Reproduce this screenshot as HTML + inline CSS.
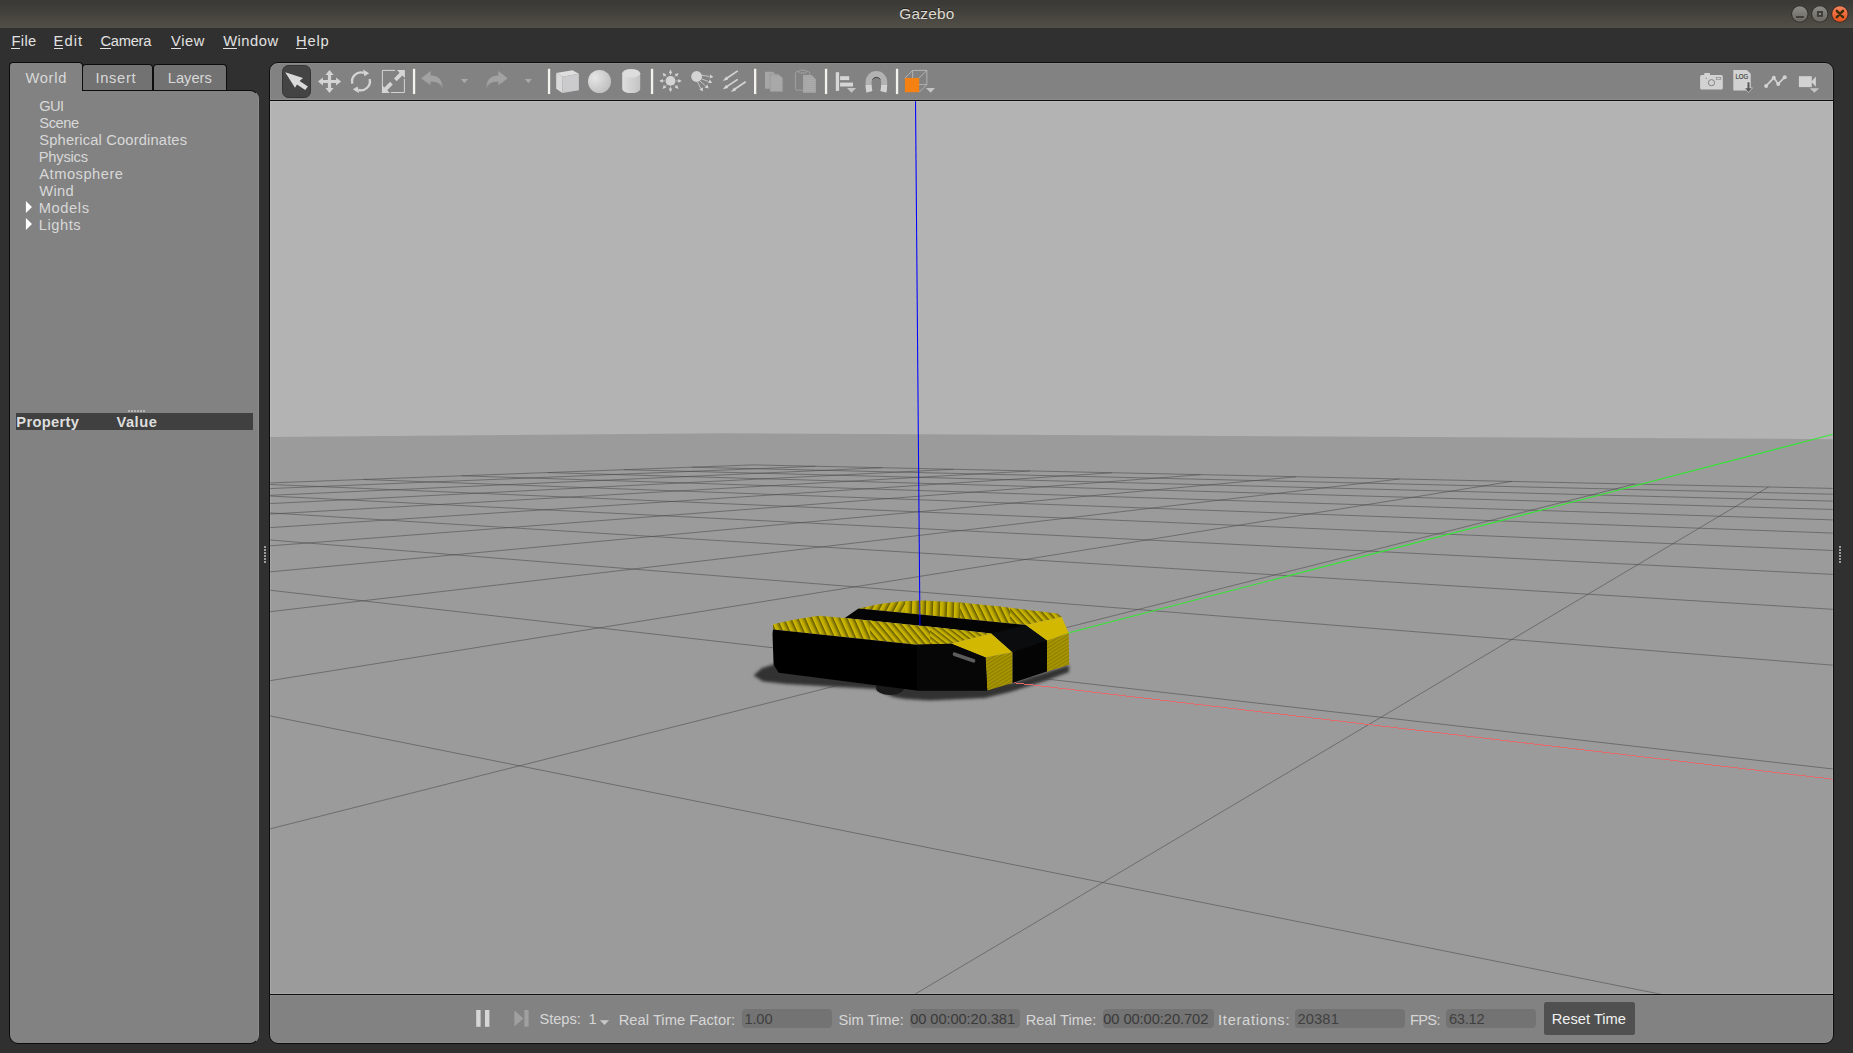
<!DOCTYPE html>
<html><head><meta charset="utf-8"><title>Gazebo</title>
<style>
*{box-sizing:border-box;margin:0;padding:0}
html,body{width:1853px;height:1053px;overflow:hidden;background:#303030}
body{font-family:"Liberation Sans",sans-serif;font-size:14.7px;color:#d0d0d0;position:relative}
.abs{position:absolute}
.t{position:absolute;white-space:pre;line-height:1;font-size:14.7px}
.t u{letter-spacing:0;text-decoration:none;box-shadow:0 1px 0 currentColor;display:inline-block;line-height:14px}
#title{left:0;top:0;width:1853px;height:28px;background:linear-gradient(#3a3935 0,#3b3a36 12%,#524f48 100%)}
.tab{position:absolute;height:26px;background:#727272;border:1px solid #0c0c0c;border-bottom:none;border-radius:4px 4px 0 0}
#pane{left:9px;top:90px;width:250px;height:954px;background:#828282;border:1px solid #0c0c0c;border-right:1px solid #8e8e8e;border-radius:0 9px 9px 9px}
#tb{left:269px;top:62px;width:1565px;height:39px;background:#828282;border:1px solid #0c0c0c;border-radius:9px 9px 0 0}
#view{left:269px;top:101px;width:1565px;height:893px;background:#b3b3b3;overflow:hidden;border-left:1px solid #0c0c0c;border-right:1px solid #0c0c0c}
.hl{position:absolute;left:0;top:0;right:0;bottom:0;box-shadow:inset 0 0 0 1px rgba(255,255,255,0.12)}
#bot{left:269px;top:994px;width:1565px;height:50px;background:#828282;border:1px solid #0c0c0c;border-radius:0 0 9px 9px}
.box{position:absolute;top:1009px;height:19px;background:#737373;border-radius:4px}
</style></head><body>
<!-- title bar -->
<div id="title" class="abs"></div>
<!-- left panel -->
<div id="pane" class="abs"></div>
<div class="tab" style="left:9px;top:62px;width:74px;height:29px;background:#828282"></div>
<div class="tab" style="left:82px;top:64px;width:71px"></div>
<div class="tab" style="left:153px;top:64px;width:74px"></div>
<div class="abs" style="left:16px;top:413px;width:237px;height:17px;background:#404040"></div>
<!-- toolbar -->
<div id="tb" class="abs"><div class="hl" style="border-radius:8px 8px 0 0;box-shadow:inset 0 0 0 1px rgba(255,255,255,0.08)"></div></div>
<!-- 3d view -->
<div id="view" class="abs">
<svg width="1563" height="893" viewBox="270 101 1563 893" style="position:absolute;left:0;top:0">
<polygon points="260,437.2 725.5,433.3 1843,439.2 1843,1004 260,1004" fill="#9b9b9b"/>
<g stroke="#4a4a4a" stroke-width="1" stroke-opacity="0.56" fill="none"><line x1="220.0" y1="484.8" x2="752.6" y2="464.9"/><line x1="220.0" y1="490.6" x2="815.3" y2="466.3"/><line x1="220.0" y1="497.6" x2="882.1" y2="467.7"/><line x1="220.0" y1="506.1" x2="953.5" y2="469.3"/><line x1="220.0" y1="516.9" x2="1030.0" y2="471.0"/><line x1="220.0" y1="530.9" x2="1112.1" y2="472.8"/><line x1="220.0" y1="549.7" x2="1200.6" y2="474.7"/><line x1="220.0" y1="576.5" x2="1296.0" y2="476.8"/><line x1="220.0" y1="617.6" x2="1399.4" y2="479.0"/><line x1="220.0" y1="688.7" x2="1511.8" y2="481.4"/><line x1="220.0" y1="705.9" x2="1883.0" y2="1038.7"/><line x1="220.0" y1="841.5" x2="1634.3" y2="484.1"/><line x1="220.0" y1="584.5" x2="1883.0" y2="774.7"/><line x1="831.1" y1="1044.0" x2="1768.4" y2="487.0"/><line x1="220.0" y1="536.0" x2="1883.0" y2="669.2"/><line x1="220.0" y1="509.8" x2="1883.0" y2="612.4"/><line x1="220.0" y1="493.5" x2="1883.0" y2="576.9"/><line x1="251.2" y1="483.7" x2="1883.0" y2="552.6"/><line x1="363.7" y1="479.5" x2="1883.0" y2="534.9"/><line x1="461.6" y1="475.8" x2="1883.0" y2="521.5"/><line x1="547.7" y1="472.6" x2="1883.0" y2="510.9"/><line x1="623.8" y1="469.7" x2="1883.0" y2="502.4"/><line x1="691.7" y1="467.2" x2="1883.0" y2="495.4"/><line x1="752.6" y1="464.9" x2="1883.0" y2="489.5"/></g>
<defs>
<linearGradient id="sg" x1="0" y1="0" x2="1" y2="0"><stop offset="0" stop-color="#d4bd00"/><stop offset="0.45" stop-color="#b9a600"/><stop offset="1" stop-color="#5e5500"/></linearGradient>
<pattern id="pf1" width="6.4" height="8" patternUnits="userSpaceOnUse" patternTransform="translate(773 624) rotate(-24)"><rect width="6.4" height="8" fill="url(#sg)"/></pattern>
<pattern id="pf2" width="5.6" height="8" patternUnits="userSpaceOnUse" patternTransform="translate(870 630) rotate(-40)"><rect width="5.6" height="8" fill="url(#sg)"/></pattern>
<pattern id="pf3" width="4.6" height="8" patternUnits="userSpaceOnUse" patternTransform="translate(930 636) rotate(-52)"><rect width="4.6" height="8" fill="url(#sg)"/></pattern>
<pattern id="pr1" width="6.6" height="8" patternUnits="userSpaceOnUse" patternTransform="translate(858 608) rotate(28)"><rect width="6.6" height="8" fill="url(#sg)"/></pattern>
<pattern id="pr2" width="7" height="8" patternUnits="userSpaceOnUse" patternTransform="translate(905 608) rotate(2)"><rect width="7" height="8" fill="url(#sg)"/></pattern>
<pattern id="pr3" width="6.2" height="8" patternUnits="userSpaceOnUse" patternTransform="translate(960 608) rotate(-26)"><rect width="6.2" height="8" fill="url(#sg)"/></pattern>
<pattern id="pr4" width="5.4" height="8" patternUnits="userSpaceOnUse" patternTransform="translate(1010 608) rotate(-42)"><rect width="5.4" height="8" fill="url(#sg)"/></pattern>
<pattern id="ps" width="3" height="3" patternUnits="userSpaceOnUse" patternTransform="rotate(-32)">
<rect width="3" height="3" fill="#a89600"/><rect width="3" height="1.1" fill="#8c7d00"/>
</pattern>
<clipPath id="cr"><path d="M858.5,608.4 L880,604 L899.5,601.5 L922.8,600.4 L960,602.5 L1000,606.5 L1057.3,613.5 L1061.8,616.9 L1025.4,624.9 L900,612.4 Z"/></clipPath>
<clipPath id="cf"><path d="M773,624.3 L795,619.5 L818.6,615.8 L844.8,618 L940,627.7 L991.2,633.4 L951.3,643.7 L916.6,644.8 L773,629.4 Z"/></clipPath>
<filter id="bl" x="-20%" y="-50%" width="140%" height="200%"><feGaussianBlur stdDeviation="1.5"/></filter>
</defs>
<!-- shadow -->
<path d="M753.5,675.5 L762,668 L775,664 L1012,683 L1069,665 L1069,672 L1045,681 L1010,692 L985,698 L930,700.5 L905,699 L893,697 L876,689 L830,686.5 L786,684 L763,681.5 Z" fill="#333333" filter="url(#bl)"/>
<ellipse cx="890" cy="688" rx="14" ry="7" fill="#1a1a1a"/>
<!-- axes -->
<g shape-rendering="crispEdges" fill="none" stroke-width="1">
<line x1="1014" y1="682.8" x2="1833" y2="779.2" stroke="#e26a6a"/>

</g>
<line x1="1066" y1="633.6" x2="1833.5" y2="434.2" stroke="#2aee2a" stroke-width="1.05" stroke-opacity="0.92"/>
<!-- rear yellow top -->
<g clip-path="url(#cr)">
<rect x="850" y="598" width="62" height="30" fill="url(#pr1)"/>
<rect x="905" y="598" width="60" height="30" fill="url(#pr2)"/>
<rect x="960" y="598" width="52" height="30" fill="url(#pr3)"/>
<rect x="1010" y="598" width="55" height="30" fill="url(#pr4)"/>
</g>
<!-- rear right bright yellow -->
<path d="M1025.4,624.9 L1061.8,616.9 L1068.7,632.9 L1047,640.8 Z" fill="#d2b800"/>
<path d="M1047,640.8 L1068.7,632.9 L1069.2,664.8 L1047,671.6 Z" fill="url(#ps)"/>
<!-- black gap -->
<path d="M844.8,618 L858.5,608.4 L900,612.4 L1025.4,624.9 L1047,640.8 L1047,671.6 L1012.3,683 L1012.3,652.2 L991.2,633.4 L940,627.7 Z" fill="#040404"/>
<path d="M991.2,633.4 L1025.4,624.9 L1047,640.8 L1012.3,652.2 Z" fill="#0b0c0e"/>
<!-- front yellow top -->
<g clip-path="url(#cf)">
<rect x="770" y="612" width="102" height="36" fill="url(#pf1)"/>
<rect x="870" y="612" width="62" height="36" fill="url(#pf2)"/>
<rect x="930" y="612" width="65" height="36" fill="url(#pf3)"/>
</g>
<!-- front right bright yellow -->
<path d="M951.3,643.7 L991.2,633.4 L1012.3,652.2 L985.5,657.4 Z" fill="#d2b800"/>
<path d="M985.5,657.4 L1012.3,652.2 L1012.3,683 L987.2,690.4 Z" fill="url(#ps)"/>
<!-- black body -->
<path d="M773,629.4 L916.6,644.8 L951.3,643.7 L985.5,657.4 L987.2,690.4 L916.6,690.4 L778.7,672.7 L773.6,664.8 L772.5,634 Z" fill="#000"/>
<path d="M917,644.8 L951.3,643.7 L985.5,657.4 L987.2,690.4 L917,690.4 Z" fill="#060606"/>
<line x1="954.5" y1="654.2" x2="973.5" y2="660.8" stroke="#5c5c5c" stroke-width="3.6" stroke-linecap="round"/>
<!-- blue axis -->
<line x1="915.5" y1="100" x2="919.95" y2="625.6" stroke="#0000ff" stroke-width="1.05"/>

</svg>
<div class="hl"></div>
</div>
<!-- bottom bar -->
<div id="bot" class="abs"><div class="hl" style="border-radius:0 0 8px 8px;box-shadow:inset 0 0 0 1px rgba(255,255,255,0.08)"></div></div>
<div class="box" style="left:742px;width:90px"></div>
<div class="box" style="left:909.5px;width:110px"></div>
<div class="box" style="left:1102.5px;width:111px"></div>
<div class="box" style="left:1295px;width:110px"></div>
<div class="box" style="left:1446px;width:90px"></div>
<div class="abs" style="left:1544px;top:1002px;width:91px;height:33px;background:#505050;border-radius:2.5px"></div>
<span class="t" style="left:899.30px;top:6.46px;color:#dfdbd2;letter-spacing:0.211px;text-shadow:0 -1px 0 #22211e;font-size:15.4px">Gazebo</span>
<span class="t" style="left:11.40px;top:34.06px;color:#e2e2e2;letter-spacing:0.401px;"><u style="margin-right:0.401px">F</u>ile</span>
<span class="t" style="left:53.50px;top:34.06px;color:#e2e2e2;letter-spacing:1.091px;"><u style="margin-right:1.091px">E</u>dit</span>
<span class="t" style="left:100.40px;top:34.06px;color:#e2e2e2;letter-spacing:-0.254px;"><u style="margin-right:-0.254px">C</u>amera</span>
<span class="t" style="left:171.00px;top:34.06px;color:#e2e2e2;letter-spacing:0.479px;"><u style="margin-right:0.479px">V</u>iew</span>
<span class="t" style="left:223.20px;top:34.06px;color:#e2e2e2;letter-spacing:0.514px;"><u style="margin-right:0.514px">W</u>indow</span>
<span class="t" style="left:296.10px;top:34.06px;color:#e2e2e2;letter-spacing:0.821px;"><u style="margin-right:0.821px">H</u>elp</span>
<span class="t" style="left:25.40px;top:71.16px;color:#d8d8d8;letter-spacing:0.720px;">World</span>
<span class="t" style="left:95.40px;top:71.16px;color:#d8d8d8;letter-spacing:0.690px;">Insert</span>
<span class="t" style="left:167.80px;top:71.16px;color:#d8d8d8;letter-spacing:-0.008px;">Layers</span>
<span class="t" style="left:39.30px;top:98.56px;color:#d8d8d8;letter-spacing:-0.716px;">GUI</span>
<span class="t" style="left:39.30px;top:115.56px;color:#d8d8d8;letter-spacing:-0.444px;">Scene</span>
<span class="t" style="left:39.30px;top:132.56px;color:#d8d8d8;letter-spacing:0.162px;">Spherical Coordinates</span>
<span class="t" style="left:38.80px;top:149.56px;color:#d8d8d8;letter-spacing:-0.227px;">Physics</span>
<span class="t" style="left:39.30px;top:166.56px;color:#d8d8d8;letter-spacing:0.498px;">Atmosphere</span>
<span class="t" style="left:39.30px;top:183.56px;color:#d8d8d8;letter-spacing:0.335px;">Wind</span>
<span class="t" style="left:38.80px;top:200.56px;color:#d8d8d8;letter-spacing:0.579px;">Models</span>
<span class="t" style="left:38.80px;top:217.56px;color:#d8d8d8;letter-spacing:0.530px;">Lights</span>
<span class="t" style="left:16.30px;top:415.16px;color:#dedede;letter-spacing:0.324px;font-weight:bold">Property</span>
<span class="t" style="left:116.40px;top:415.16px;color:#dedede;letter-spacing:0.523px;font-weight:bold">Value</span>
<span class="t" style="left:539.40px;top:1011.66px;color:#d6d6d6;letter-spacing:-0.032px;">Steps:</span>
<span class="t" style="left:588.60px;top:1011.66px;color:#d6d6d6;letter-spacing:0.000px;">1</span>
<span class="t" style="left:618.70px;top:1013.26px;color:#d6d6d6;letter-spacing:0.038px;">Real Time Factor:</span>
<span class="t" style="left:744.40px;top:1012.36px;color:#404040;letter-spacing:-0.139px;">1.00</span>
<span class="t" style="left:838.50px;top:1013.26px;color:#d6d6d6;letter-spacing:-0.008px;">Sim Time:</span>
<span class="t" style="left:910.20px;top:1012.36px;color:#3a3a3a;letter-spacing:-0.093px;">00 00:00:20.381</span>
<span class="t" style="left:1025.70px;top:1013.26px;color:#d6d6d6;letter-spacing:0.047px;">Real Time:</span>
<span class="t" style="left:1103.20px;top:1012.36px;color:#3a3a3a;letter-spacing:-0.072px;">00 00:00:20.702</span>
<span class="t" style="left:1218.10px;top:1013.26px;color:#d6d6d6;letter-spacing:0.689px;">Iterations:</span>
<span class="t" style="left:1297.40px;top:1012.36px;color:#404040;letter-spacing:0.157px;">20381</span>
<span class="t" style="left:1410.10px;top:1013.26px;color:#d6d6d6;letter-spacing:-0.755px;">FPS:</span>
<span class="t" style="left:1448.90px;top:1012.36px;color:#404040;letter-spacing:-0.272px;">63.12</span>
<span class="t" style="left:1551.70px;top:1011.66px;color:#f0f0f0;letter-spacing:0.003px;">Reset Time</span>
<svg class="abs" width="1853" height="1053" viewBox="0 0 1853 1053" style="left:0;top:0;pointer-events:none">
<defs>
<linearGradient id="gb" x1="0" y1="0" x2="0" y2="1"><stop offset="0" stop-color="#8d8c86"/><stop offset="1" stop-color="#696862"/></linearGradient>
<linearGradient id="gc" x1="0" y1="0" x2="0" y2="1"><stop offset="0" stop-color="#f5845c"/><stop offset="1" stop-color="#e7511c"/></linearGradient>
<radialGradient id="gs" cx="0.3" cy="0.33" r="0.75"><stop offset="0" stop-color="#e6e6e6"/><stop offset="0.5" stop-color="#d2d2d2"/><stop offset="1" stop-color="#c0c0c0"/></radialGradient>
<linearGradient id="gy" x1="0" y1="0" x2="1" y2="0"><stop offset="0" stop-color="#dedede"/><stop offset="1" stop-color="#c4c4c4"/></linearGradient>
<linearGradient id="gu" x1="0" y1="0" x2="0" y2="1"><stop offset="0" stop-color="#a2a2a2"/><stop offset="0.55" stop-color="#a2a2a2"/><stop offset="1" stop-color="#a2a2a2" stop-opacity="0"/></linearGradient>
</defs>
<!-- window buttons -->
<g>
<circle cx="1799.8" cy="14" r="8.6" fill="#2e2d29"/><circle cx="1799.8" cy="14" r="7.7" fill="url(#gb)"/>
<rect x="1796" y="16.1" width="7.8" height="1.8" fill="#3c3b37"/>
<circle cx="1819.8" cy="14" r="8.6" fill="#2e2d29"/><circle cx="1819.8" cy="14" r="7.7" fill="url(#gb)"/>
<rect x="1817.9" y="12" width="4.1" height="3.9" fill="#8b8a84" stroke="#3c3b37" stroke-width="1.9"/>
<circle cx="1839.9" cy="14" r="8.6" fill="#3a2a22"/><circle cx="1839.9" cy="14" r="7.7" fill="url(#gc)"/>
<path d="M1836.8,10.9 L1843,17.1 M1843,10.9 L1836.8,17.1" stroke="#3a2d0c" stroke-width="2.5" stroke-linecap="round"/>
</g>
<!-- separators -->
<rect x="412.9" y="68.8" width="2.3" height="25.3" fill="#f4f2ec"/><rect x="547.9" y="68.8" width="2.3" height="25.3" fill="#f4f2ec"/><rect x="650.9" y="68.8" width="2.3" height="25.3" fill="#f4f2ec"/><rect x="754.0" y="68.8" width="2.3" height="25.3" fill="#f4f2ec"/><rect x="824.9" y="68.8" width="2.3" height="25.3" fill="#f4f2ec"/><rect x="895.9" y="68.8" width="2.3" height="25.3" fill="#f4f2ec"/>
<!-- selected tool button -->
<rect x="282.5" y="65.5" width="28" height="32" rx="6" fill="#444444" stroke="#353535"/>
<path d="M285.2,72.2 L303,77.9 L299.6,81 L307.9,86.6 L305.2,90 L297,84.5 L295,87.7 Z" fill="#dadada"/>
<!-- move -->
<g fill="#d4d4d4">
<path d="M329.5,69.9 L333.6,74.9 L331.1,74.9 L331.1,79.9 L336.1,79.9 L336.1,77.4 L341.1,81.5 L336.1,85.6 L336.1,83.1 L331.1,83.1 L331.1,88.1 L333.6,88.1 L329.5,93 L325.4,88.1 L327.9,88.1 L327.9,83.1 L322.9,83.1 L322.9,85.6 L318,81.5 L322.9,77.4 L322.9,79.9 L327.9,79.9 L327.9,74.9 L325.4,74.9 Z"/>
</g>
<!-- rotate -->
<g fill="none" stroke="#d4d4d4" stroke-width="2.3">
<path d="M352.4,83.6 A8.9,8.9 0 0 1 363.7,72.8"/>
<path d="M369.6,79 A8.9,8.9 0 0 1 358.3,89.8"/>
</g>
<path d="M363,69.4 L369.2,73.3 L364.4,76.2 Z" fill="#d4d4d4"/>
<path d="M359,93.2 L352.8,89.3 L357.6,86.4 Z" fill="#d4d4d4"/>
<!-- scale -->
<g fill="none" stroke="#d4d4d4" stroke-width="1">
<path d="M395,70.4 L382.4,70.4 L382.4,86.5"/><path d="M391,92.5 L404.4,92.5 L404.4,79"/>
</g>
<g fill="#d4d4d4">
<path d="M404.9,69.9 L404.9,78 L402.4,75.6 L396.6,81.2 L394,78.6 L399.6,72.8 L397,70 Z"/>
<path d="M381.9,93 L381.9,85 L384.4,87.4 L390.2,81.8 L392.8,84.4 L387.2,90.2 L389.8,93 Z"/>
</g>
<!-- undo / redo -->
<path d="M421.2,78.2 L430.7,71.1 L430.7,75.6 C438,75.6 443.6,80 442.8,91 C442,84.5 438,81.4 430.7,81.4 L430.7,85.4 Z" fill="url(#gu)"/>
<path d="M507.7,78.2 L498.3,71.1 L498.3,75.6 C491,75.6 485.4,80 486.2,91 C487,84.5 491,81.4 498.3,81.4 L498.3,85.4 Z" fill="url(#gu)"/>
<path d="M460.9,79 L468.1,79 L464.5,83.2 Z M524.7,79 L531.9,79 L528.3,83.2 Z" fill="#a8a8a8"/>
<!-- cube -->
<path d="M556.2,73 L572.5,70.2 L578.9,73.7 L562.7,76.7 Z" fill="#dedede"/>
<path d="M556.2,73 L562.7,76.7 L562.3,93 L556.2,88.8 Z" fill="#d9d9d9"/>
<path d="M562.7,76.7 L578.9,73.7 L578.9,90.3 L562.3,93 Z" fill="#cbcbcd"/>
<!-- sphere -->
<circle cx="599.5" cy="81.5" r="11.5" fill="url(#gs)"/>
<!-- cylinder -->
<path d="M622.2,73.3 L622.2,89 A9,4.1 0 0 0 640.2,89 L640.2,73.3 Z" fill="url(#gy)"/>
<ellipse cx="631.2" cy="73.3" rx="9" ry="4.3" fill="#dddddd"/>
<!-- point light -->
<g fill="#d4d4d4" stroke="#d4d4d4">
<circle cx="670.5" cy="80.9" r="4.9" stroke="none"/>
<g id="ray" stroke-width="0.8"><path d="M670.5,75 L670.5,72"/><path d="M670.5,69.6 L672.3,73.2 L668.7,73.2 Z" stroke="none"/></g>
<use href="#ray" transform="rotate(45 670.5 80.9)"/><use href="#ray" transform="rotate(90 670.5 80.9)"/><use href="#ray" transform="rotate(135 670.5 80.9)"/>
<use href="#ray" transform="rotate(180 670.5 80.9)"/><use href="#ray" transform="rotate(225 670.5 80.9)"/><use href="#ray" transform="rotate(270 670.5 80.9)"/><use href="#ray" transform="rotate(315 670.5 80.9)"/>
</g>
<!-- spot light -->
<g fill="#d4d4d4" stroke="#d4d4d4" stroke-width="0.8">
<circle cx="696.6" cy="76.5" r="5.4" stroke="none"/>
<path d="M701,75.2 L709,76.4 M701,78.6 L708,81.4 M699.6,80.8 L705.2,85.6 M697.6,82 L700.8,88.6"/>
<g stroke="none">
<path d="M713.4,76.9 L709.6,78.6 L710,74.6 Z"/>
<path d="M712.2,83 L708,83 L709.8,79.6 Z"/>
<path d="M708.6,88.6 L704.6,87.4 L707.4,84.4 Z"/>
<path d="M702.8,91.6 L699.4,89.2 L702.8,87.6 Z"/>
</g></g>
<!-- directional light -->
<g stroke="#d4d4d4" stroke-width="1.7" fill="#d4d4d4">
<path d="M737.7,70.9 L726.4,78.5 M737.7,79.4 L726.4,86.9 M745.7,81.7 L734.2,89.5"/>
<g stroke="none"><path d="M722.8,80.9 L726.2,76.4 L728.2,79.6 Z"/><path d="M722.8,89.2 L726.2,84.8 L728.2,88 Z"/><path d="M730.8,91.9 L734.2,87.4 L736.2,90.6 Z"/></g>
</g>
<!-- copy (disabled) -->
<g fill="#a6a6a6">
<path d="M765,71.8 L773,71.8 L776,74.6 L776,88.8 L765,88.8 Z"/>
<path d="M770,74.2 L778.6,74.2 L782.8,78.2 L782.8,91.8 L770,91.8 Z" stroke="#8e8e8e" stroke-width="0.5"/>
</g>
<!-- paste (disabled) -->
<rect x="795.4" y="71.6" width="14.4" height="18.6" rx="1.6" fill="none" stroke="#a4a4a4" stroke-width="0.9"/>
<rect x="799" y="70.2" width="7.2" height="2.8" rx="1.2" fill="#828282" stroke="#a4a4a4" stroke-width="0.9"/>
<path d="M803,75 L811.6,75 L815.9,79.2 L815.9,92.7 L803,92.7 Z" fill="#a6a6a6"/>
<path d="M771.5,77.5 H781.5 M804.5,78.5 H814.5" stroke="#b6b6b6" stroke-width="0.6" stroke-opacity="0.6"/><path d="M771.5,79.5 H781.5 M804.5,80.5 H814.5" stroke="#b6b6b6" stroke-width="0.6" stroke-opacity="0.6"/><path d="M771.5,81.5 H781.5 M804.5,82.5 H814.5" stroke="#b6b6b6" stroke-width="0.6" stroke-opacity="0.6"/><path d="M771.5,83.5 H781.5 M804.5,84.5 H814.5" stroke="#b6b6b6" stroke-width="0.6" stroke-opacity="0.6"/><path d="M771.5,85.5 H781.5 M804.5,86.5 H814.5" stroke="#b6b6b6" stroke-width="0.6" stroke-opacity="0.6"/><path d="M771.5,87.5 H781.5 M804.5,88.5 H814.5" stroke="#b6b6b6" stroke-width="0.6" stroke-opacity="0.6"/><path d="M771.5,89.5 H781.5 M804.5,90.5 H814.5" stroke="#b6b6b6" stroke-width="0.6" stroke-opacity="0.6"/>
<!-- align -->
<g fill="#d6d6d6">
<rect x="835.8" y="72.2" width="3.3" height="18.7"/><rect x="840.1" y="76.2" width="9.1" height="3.9"/><rect x="840.1" y="82.6" width="12.9" height="3.9"/>
<path d="M847,87.9 L856.1,87.9 L851.5,92.7 Z" fill="#c4c4c4"/>
</g>
<!-- magnet -->
<clipPath id="mt"><rect x="860" y="84.9" width="34" height="8"/></clipPath>
<path id="mg" d="M869.4,91.8 C868.4,88 868.6,84 868.6,81.9 A7.8,7.8 0 0 1 884.2,81.9 C884.2,84 884.4,88 883.4,91.8" fill="none" stroke="#b2b2b2" stroke-width="6"/>
<path d="M869.4,91.8 C868.4,88 868.6,84 868.6,81.9 A7.8,7.8 0 0 1 884.2,81.9 C884.2,84 884.4,88 883.4,91.8" fill="none" stroke="#d2d2d2" stroke-width="6" clip-path="url(#mt)"/>
<path d="M872.4,79.6 A4.6,4.6 0 0 1 880.4,79.6" fill="none" stroke="#3a3a3a" stroke-width="0.8"/>
<!-- view cube -->
<g fill="none" stroke="#bdbdbd" stroke-width="0.8">
<path d="M912.6,70.4 L926.9,70.4 L926.9,84.6 L912.6,84.6 Z" stroke-linejoin="round"/>
<path d="M904.9,78 L912.6,70.4 M919.1,78 L926.9,70.4 M919.1,92.2 L926.9,84.6 M904.9,92.2 L912.6,84.6"/>
</g>
<rect x="904.9" y="78" width="14.3" height="14.2" fill="#f58113"/>
<path d="M926,87.9 L935.1,87.9 L930.6,92.7 Z" fill="#c4c4c4"/>
<!-- screenshot camera -->
<g fill="#d2d2d2">
<rect x="1700.1" y="75" width="22.7" height="14.6" rx="1.6"/><rect x="1704.2" y="73" width="5.8" height="3" rx="0.8"/>
</g>
<circle cx="1711.5" cy="82.7" r="3.1" fill="#d2d2d2" stroke="#828282" stroke-width="1"/>
<rect x="1716.2" y="77.4" width="4.6" height="1.9" fill="none" stroke="#828282" stroke-width="0.6"/>
<circle cx="1706.2" cy="78.2" r="0.6" fill="#828282"/>
<!-- log -->
<path d="M1733.3,70.1 L1746.8,70.1 L1750.7,73.8 L1750.7,90.4 L1733.3,90.4 Z" fill="#d2d2d2"/>
<text x="1735.4" y="79" font-size="6.6" font-family="Liberation Sans, sans-serif" fill="#3c3c3c" stroke="#3c3c3c" stroke-width="0.15" textLength="12.8" lengthAdjust="spacingAndGlyphs">LOG</text>
<path d="M1747.1,81.9 h2.8 v6 h2.6 l-4,4.6 l-4,-4.6 h2.6 Z" fill="#5a5a5a" stroke="#e4e4e4" stroke-width="0.6"/>
<!-- plot -->
<path d="M1766.1,85.9 L1773.8,77.8 L1778.2,83.9 L1784.7,77.2" fill="none" stroke="#d2d2d2" stroke-width="1.7"/>
<g fill="#d2d2d2"><circle cx="1766.1" cy="85.9" r="2"/><circle cx="1773.8" cy="77.8" r="2"/><circle cx="1778.2" cy="83.9" r="2"/><circle cx="1784.7" cy="77.2" r="2"/></g>
<!-- video -->
<g fill="#d2d2d2"><rect x="1798.9" y="76.2" width="12.9" height="10.9"/><path d="M1811.2,81.7 L1815.9,76.6 L1815.9,86.7 Z"/><path d="M1809.8,88.3 L1819.1,88.3 L1814.4,92.8 Z" fill="#c4c4c4"/></g>
<!-- bottom bar: pause / step -->
<rect x="476.2" y="1010" width="4.4" height="16.8" fill="#d6d6d6"/><rect x="485" y="1010" width="4.4" height="16.8" fill="#d6d6d6"/>
<path d="M514.4,1010.4 L523.4,1018.4 L514.4,1026.4 Z" fill="#a0a0a0"/><rect x="524.4" y="1010" width="4.2" height="16.8" fill="#a0a0a0"/>
<path d="M599.9,1020.2 L609.1,1020.2 L604.5,1025.1 Z" fill="#c8c8c8"/>
<!-- handles -->
<g fill="#9c9c9c"><rect x="264" y="546" width="2" height="2"/><rect x="1839" y="546" width="2" height="2"/><rect x="264" y="549" width="2" height="2"/><rect x="1839" y="549" width="2" height="2"/><rect x="264" y="552" width="2" height="2"/><rect x="1839" y="552" width="2" height="2"/><rect x="264" y="555" width="2" height="2"/><rect x="1839" y="555" width="2" height="2"/><rect x="264" y="558" width="2" height="2"/><rect x="1839" y="558" width="2" height="2"/><rect x="264" y="561" width="2" height="2"/><rect x="1839" y="561" width="2" height="2"/><rect x="128" y="410" width="2" height="2" fill="#b4b4b4"/><rect x="131" y="410" width="2" height="2" fill="#b4b4b4"/><rect x="134" y="410" width="2" height="2" fill="#b4b4b4"/><rect x="137" y="410" width="2" height="2" fill="#b4b4b4"/><rect x="140" y="410" width="2" height="2" fill="#b4b4b4"/><rect x="143" y="410" width="2" height="2" fill="#b4b4b4"/></g>
<!-- tree arrows -->
<path d="M25.9,201.1 L32,207.05 L25.9,213 Z M25.9,218.1 L32,224.05 L25.9,230 Z" fill="#ffffff"/>
</svg>

</body></html>
